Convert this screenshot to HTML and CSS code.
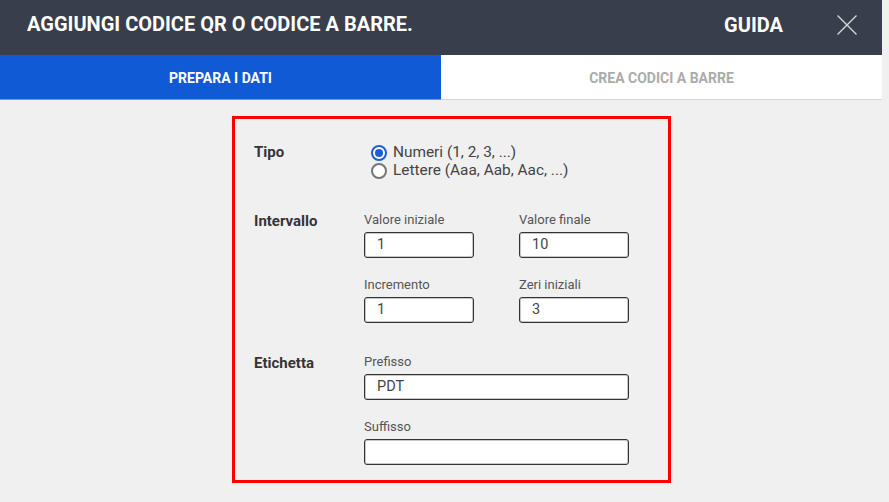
FILE: index.html
```html
<!DOCTYPE html>
<html lang="it">
<head>
<meta charset="utf-8">
<title>Aggiungi codice QR o codice a barre</title>
<link rel="stylesheet" href="styles.css">
</head>
<body>
<div class="app">
  <header class="topbar">
    <h1 class="title">AGGIUNGI CODICE QR O CODICE A BARRE.</h1>
    <a class="help">GUIDA</a>
    <button class="close" aria-label="Chiudi">
      <svg width="20" height="20" viewBox="0 0 20 20"><path d="M0.5 0.5 L19.5 19.5 M19.5 0.5 L0.5 19.5" stroke="#d4d6da" stroke-width="1.4" fill="none"/></svg>
    </button>
  </header>
  <nav class="tabs">
    <div class="tab active">PREPARA I DATI</div>
    <div class="tab">CREA CODICI A BARRE</div>
  </nav>
  <main class="content">
    <section class="panel">
      <div class="row row-tipo">
        <div class="row-label">Tipo</div>
        <div class="radios">
          <label class="radio"><span class="dot checked"></span>Numeri (1, 2, 3, ...)</label>
          <label class="radio"><span class="dot"></span>Lettere (Aaa, Aab, Aac, ...)</label>
        </div>
      </div>
      <div class="row row-range">
        <div class="row-label">Intervallo</div>
        <div class="fields grid2">
          <div class="field"><div class="field-label">Valore iniziale</div><div class="input">1</div></div>
          <div class="field"><div class="field-label">Valore finale</div><div class="input">10</div></div>
          <div class="field"><div class="field-label">Incremento</div><div class="input">1</div></div>
          <div class="field"><div class="field-label">Zeri iniziali</div><div class="input">3</div></div>
        </div>
      </div>
      <div class="row row-label-group">
        <div class="row-label">Etichetta</div>
        <div class="fields">
          <div class="field"><div class="field-label">Prefisso</div><div class="input wide">PDT</div></div>
          <div class="field"><div class="field-label">Suffisso</div><div class="input wide"></div></div>
        </div>
      </div>
    </section>
  </main>
</div>
</body>
</html>
```
FILE: styles.css
```css
* { box-sizing: border-box; }
html, body { margin: 0; padding: 0; }
body {
  background: #f0f0f0;
  font-family: Roboto, "Liberation Sans", Arial, sans-serif;
  color: #444;
}
.app { width: 882px; }

.topbar {
  height: 56px;
  background: #383e4b;
  display: flex;
  align-items: center;
  padding: 0 25px 5px 27px;
  border-bottom: 1px solid #c4c8cf;
}
.title {
  margin: 0;
  flex: 1;
  font-size: 20px;
  font-weight: 700;
  color: #fff;
  line-height: 1.172;
}
.help {
  font-size: 20px;
  font-weight: 700;
  color: #fff;
  margin-right: 54px;
}
.close {
  background: none;
  border: 0;
  padding: 0;
  width: 20px;
  height: 20px;
  display: block;
}
.close svg { display: block; }

.tabs {
  display: flex;
  height: 45px;
  margin-top: -1px;
}
.tab {
  flex: 1;
  display: flex;
  align-items: center;
  justify-content: center;
  padding-top: 2px;
  font-size: 14px;
  font-weight: 700;
  color: #ababab;
  background: #fff;
  border-bottom: 1px solid #d6d6d6;
}
.tab.active {
  background: #105ad5;
  color: #fff;
  border-bottom-color: #6f9ae3;
}

.content { padding: 16px 0 0 232px; }
.panel {
  width: 439px;
  border: 3px solid #ff0000;
  padding: 24px 0 15px 19px;
}
.row { display: flex; align-items: flex-start; }
.row-range { margin-top: 32px; }
.row-label-group { margin-top: 30px; }
.row-label {
  width: 110px;
  flex: none;
  font-size: 15px;
  line-height: 18px;
  font-weight: 700;
  color: #353535;
}
.row-range .row-label, .row-label-group .row-label { margin-top: 1px; }

.radios { padding-left: 7px; }
.radio {
  display: flex;
  align-items: center;
  font-size: 15.4px;
  line-height: 18px;
  color: #444;
}
.dot {
  width: 16px;
  height: 16px;
  border: 2px solid #767676;
  border-radius: 50%;
  margin-right: 6px;
  margin-top: 1px;
  flex: none;
  background: #fff;
  position: relative;
}
.dot.checked { border-color: #1a5fd6; }
.dot.checked::after {
  content: "";
  position: absolute;
  left: 2px; top: 2px;
  width: 8px; height: 8px;
  border-radius: 50%;
  background: #1a5fd6;
}

.fields { display: flex; flex-direction: column; gap: 18px; }
.fields.grid2 {
  display: grid;
  grid-template-columns: 110px 110px;
  column-gap: 45px;
  row-gap: 18px;
}
.field-label {
  font-size: 13px;
  line-height: 17px;
  color: #555;
  margin-bottom: 4px;
}
.input {
  width: 110px;
  height: 26px;
  background: #fff;
  border: 1px solid #333;
  border-radius: 3px;
  box-shadow: inset 0 0 0 1px #c8c8c8;
  padding-left: 12px;
  font-size: 14.5px;
  line-height: 24px;
  color: #444;
}
.input.wide { width: 265px; }
```
